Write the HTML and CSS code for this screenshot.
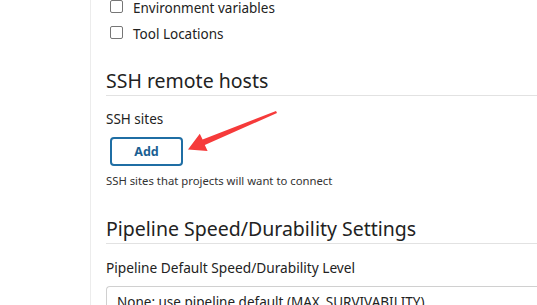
FILE: index.html
```html
<!DOCTYPE html>
<html lang="en">
<head>
    <meta charset="UTF-8">
    <title>Configure System</title>
    <link rel="stylesheet" href="styles.css">
</head>
<body>
    <div class="layout">
        <div class="sidebar"></div>
        <div class="main">
            <div class="check-row">
                <span class="checkbox"></span>
                <span class="check-label">Environment variables</span>
            </div>
            <div class="check-row">
                <span class="checkbox"></span>
                <span class="check-label">Tool Locations</span>
            </div>

            <h2 class="section-title">SSH remote hosts</h2>
            <div class="field-label">SSH sites</div>
            <div class="repeat-add">
                <button class="add-btn">Add</button>
            </div>
            <div class="help">SSH sites that projects will want to connect</div>

            <h2 class="section-title section-title-2">Pipeline Speed/Durability Settings</h2>
            <div class="field-label field-label-2">Pipeline Default Speed/Durability Level</div>
            <div class="select-box">None: use pipeline default (MAX_SURVIVABILITY)</div>
        </div>
    </div>

    <!-- red annotation arrow pointing at the Add button -->
    <svg class="annotation" width="537" height="305" viewBox="0 0 537 305">
        <path d="M276,111 L202.6,139.4 L199.8,133.8 L188,149.5 L207.6,151 L204.8,145 L277,113 Z" fill="#f63a3a"/>
    </svg>
</body>
</html>
```

FILE: styles.css
```css
html, body {
    margin: 0;
    height: 100%;
    background: #fff;
    overflow: hidden;
}
body {
    font-family: "Noto Sans", "Open Sans", sans-serif;
    color: #333;
}
.layout {
    display: flex;
    min-height: 100%;
}
.sidebar {
    width: 90px;
    flex: none;
    border-right: 1px solid #ececec;
}
.main {
    flex: 1;
    padding-left: 15px;
    margin-top: -7px;
}
.check-row {
    display: flex;
    align-items: center;
    height: 26px;
    padding-left: 4px;
}
.checkbox {
    width: 11px;
    height: 11px;
    border: 1px solid #767676;
    border-radius: 2px;
    flex: none;
}
.check-label {
    margin-left: 10px;
    padding-top: 3px;
    font-size: 13.5px;
    color: #222;
}
.section-title {
    margin: 22px 0 0;
    font-size: 19.5px;
    font-weight: 400;
    line-height: 28px;
    color: #222;
    border-bottom: 1px solid #e2e2e2;
}
.section-title-2 {
    margin-top: 26px;
}
.field-label {
    margin-top: 13px;
    font-size: 13.5px;
    line-height: 20px;
    color: #222;
}
.field-label-2 {
    margin-top: 14px;
    font-size: 13.7px;
}
.repeat-add {
    margin-top: 8px;
    padding-left: 4px;
}
.add-btn {
    width: 73px;
    height: 29px;
    background: #fff;
    border: 2px solid #1f6ea4;
    border-radius: 4px;
    color: #1b5f92;
    font-family: inherit;
    font-weight: 700;
    font-size: 12.5px;
    padding: 0;
    display: block;
}
.help {
    margin-top: 7px;
    font-size: 11.3px;
    line-height: 16px;
    color: #333;
}
.select-box {
    margin-top: 8px;
    height: 34px;
    border: 1px solid #d0d0d0;
    border-radius: 4px 0 0 4px;
    border-right: none;
    padding-left: 10px;
    font-size: 13.5px;
    line-height: 30px;
    color: #222;
}
.annotation {
    position: absolute;
    left: 0;
    top: 0;
    pointer-events: none;
}
```
